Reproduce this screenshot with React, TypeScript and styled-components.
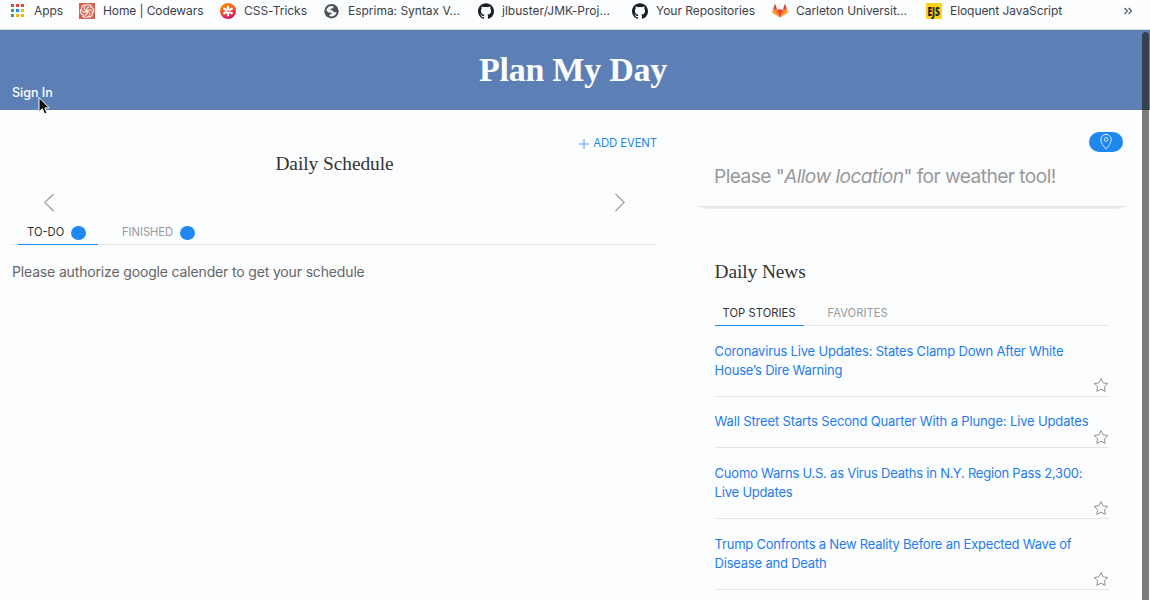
import React from "react";
import styled, { createGlobalStyle } from "styled-components";
import { SiGithub } from "react-icons/si";

const GlobalStyle = createGlobalStyle`
  *, *::before, *::after { box-sizing: border-box; }
  html, body { margin: 0; height: 100%; overflow: hidden; }
  body {
    background: #fcfdff;
    font-family: Inter, "Liberation Sans", sans-serif;
    color: #666;
  }
  h1, h2, p, ul { margin: 0; padding: 0; }
  ul { list-style: none; }
  button { font: inherit; border: 0; background: none; padding: 0; cursor: pointer; }
  a { text-decoration: none; color: inherit; }
  svg { display: block; flex: none; }
`;

const Window = styled.div`
  position: relative;
  display: flex;
  flex-direction: column;
  width: 1150px;
  height: 600px;
  overflow: hidden;
`;

/* ---------- bookmarks bar ---------- */

const BookmarksBar = styled.nav`
  display: flex;
  align-items: center;
  height: 30px;
  padding: 0 0 7px 10px;
  border-bottom: 1px solid #d9e0e3;
  flex: none;
`;

const Bookmark = styled.a<{ $width: number; $gap?: number; $tracking?: number }>`
  display: flex;
  align-items: center;
  gap: ${(p) => p.$gap ?? 8}px;
  width: ${(p) => p.$width}px;
  flex: none;
  font-size: 12px;
  line-height: 16px;
  letter-spacing: ${(p) => p.$tracking ?? 0}px;
  color: #3c3f48;
  white-space: nowrap;
`;

const EjsLogo = styled.span`
  display: flex;
  align-items: center;
  justify-content: center;
  width: 16px;
  height: 16px;
  background: #fcd21c;
  color: #222;
  font: 700 13px/16px "Open Sans", sans-serif;
  letter-spacing: 0;

  b { transform: scaleX(0.64); }
`;

const Overflow = styled.button`
  margin-left: auto;
  margin-right: 18px;
`;

/* ---------- page header ---------- */

const Header = styled.header`
  display: grid;
  grid-template-rows: 54px 26px;
  height: 80px;
  background: #5c80b5;
  color: #fcfdff;
  flex: none;
`;

const SiteTitle = styled.h1`
  padding: 13px 4px 0 0;
  font: 700 34px/54px "Liberation Serif", serif;
  letter-spacing: -0.24px;
  text-align: center;
`;

const SignIn = styled.a`
  justify-self: start;
  padding-left: 12px;
  font-size: 12.5px;
  font-weight: 500;
  line-height: 18px;
`;

/* ---------- layout ---------- */

const Main = styled.main`
  display: grid;
  grid-template-columns: 645px 432px;
  column-gap: 39px;
  padding-left: 12px;
  flex: 1;
  min-height: 0;
`;

const SectionTitle = styled.h2<{ $tracking: number }>`
  font: 400 19.4px/28px "Liberation Serif", serif;
  letter-spacing: ${(p) => p.$tracking}px;
  color: #333;
`;

const Tabs = styled.ul<{ $inset?: number }>`
  display: flex;
  height: 26px;
  padding-left: ${(p) => p.$inset ?? 0}px;
  border-bottom: 1px solid #e5e5e8;
`;

const Tab = styled.li<{ $active?: boolean; $width: number; $tracking: number; $pad?: number }>`
  display: flex;
  align-items: center;
  gap: 7px;
  width: ${(p) => p.$width}px;
  height: 26px;
  padding: 1px 0 0 ${(p) => p.$pad ?? 8}px;
  border-bottom: 1px solid ${(p) => (p.$active ? "#1e87f0" : "transparent")};
  font-size: 11.2px;
  line-height: 16px;
  letter-spacing: ${(p) => p.$tracking}px;
  color: ${(p) => (p.$active ? "#333" : "#999")};
  white-space: nowrap;
`;

/* ---------- schedule ---------- */

const Schedule = styled.section`
  display: flex;
  flex-direction: column;
  padding-top: 24px;
`;

const AddEvent = styled.button`
  display: flex;
  align-items: center;
  align-self: flex-end;
  gap: 4px;
  height: 18px;
  padding-top: 1px;
  font-size: 11.3px;
  line-height: 17px;
  letter-spacing: -0.08px;
  color: #1e87f0;
`;

const ScheduleTitle = styled(SectionTitle)`
  margin-top: -2px;
  text-align: center;
`;

const DayNav = styled.div`
  display: flex;
  justify-content: space-between;
  margin-top: 15px;
  padding: 0 32px;
  color: #999;
`;

const ScheduleTabs = styled.div`
  margin-top: 7px;
`;

const Badge = styled.span`
  width: 15px;
  height: 14px;
  margin-top: 2px;
  border-radius: 50%;
  background: #1e87f0;
`;

const Notice = styled.p`
  margin-top: 16px;
  font-size: 14px;
  line-height: 22px;
  letter-spacing: -0.155px;
`;

/* ---------- sidebar ---------- */

const Sidebar = styled.aside`
  display: flex;
  flex-direction: column;
  padding-top: 22px;
`;

const Weather = styled.section`
  display: flex;
  flex-direction: column;
  height: 74px;
  padding: 0 5px 0 18px;
`;

const LocationButton = styled.button`
  display: flex;
  align-items: center;
  justify-content: center;
  align-self: flex-end;
  width: 34px;
  height: 20px;
  border-radius: 10px;
  background: #1e87f0;
  color: #fff;
`;

const WeatherNotice = styled.p`
  margin-top: 10px;
  font-size: 19.2px;
  line-height: 28px;
  letter-spacing: -0.58px;
  color: #999;
  white-space: nowrap;
`;

const CardEdge = styled.div`
  height: 3px;
  background: linear-gradient(#e2e4e6, #eceef0);
  clip-path: polygon(0 0, 100% 0, 97.5% 100%, 2.5% 100%);
`;

const News = styled.section`
  width: 413px;
  padding: 49px 0 0 18.6px;
`;

const NewsTabs = styled.div`
  margin-top: 14px;
`;

const Story = styled.li<{ $lines: number }>`
  position: relative;
  height: ${(p) => (p.$lines === 2 ? 71 : 51)}px;
  padding-top: ${(p) => (p.$lines === 2 ? 16 : 15)}px;
  border-bottom: 1px solid #e5e5e8;
  font-size: 13px;
  line-height: 19px;
  color: #1e7cf0;
  white-space: nowrap;
`;

const StoryLine = styled.span<{ $tracking: number }>`
  display: block;
  letter-spacing: ${(p) => p.$tracking}px;
`;

const Favorite = styled.button`
  position: absolute;
  right: 0;
  bottom: 2px;
  color: #8c8c8c;

  ${Story}:first-child & { bottom: 3px; }
`;

/* ---------- overlays ---------- */

const Scrollbar = styled.div`
  position: absolute;
  top: 32px;
  right: 1px;
  bottom: 0;
  width: 7px;
  border-radius: 4px 4px 0 0;
  background: linear-gradient(#37404f 78px, #7b7b7b 78px);
`;

const Cursor = styled.svg`
  position: absolute;
  left: 36.5px;
  top: 96px;
`;

/* ---------- drawings ---------- */

const appColors = ["#ea4335", "#ea4335", "#ea4335", "#34a853", "#1e87f0", "#fbb704", "#34a853", "#fbb704", "#fbb704"];

const AppsIcon = () => (
  <svg width="14" height="14" viewBox="0 0 14 14" shapeRendering="crispEdges">
    {appColors.map((fill, i) => (
      <rect key={i} x={1 + (i % 3) * 5} y={Math.floor(i / 3) * 5} width="3" height="3" fill={fill} />
    ))}
  </svg>
);

const CodewarsIcon = () => (
  <svg width="16" height="16" viewBox="0 0 16 16">
    <rect width="16" height="16" fill="#d0604f" />
    <g fill="none" stroke="#fbe6e2" strokeWidth="1.25" strokeLinecap="round">
      {[0, 60, 120, 180, 240, 300].map((angle) => (
        <g key={angle} transform={`rotate(${angle} 8 8)`}>
          <path d="M8 8C7.2 6 8 4.3 10 3.8" />
          <path d="M6 3C7.8 1 10.8 1.2 12.3 3" />
        </g>
      ))}
    </g>
  </svg>
);

const CssTricksIcon = () => (
  <svg width="16" height="16" viewBox="0 0 16 16">
    <defs>
      <linearGradient id="tricks" x1="0.2" y1="0" x2="0.6" y2="1">
        <stop offset="0.1" stopColor="#ff8a00" />
        <stop offset="0.9" stopColor="#da1b60" />
      </linearGradient>
    </defs>
    <circle cx="8" cy="8" r="8" fill="url(#tricks)" />
    <g stroke="#fff" strokeWidth="2.3" strokeLinecap="round">
      <path d="M8 3.6V12.4M4.2 5.8L11.8 10.2M11.8 5.8L4.2 10.2" />
    </g>
    <circle cx="8" cy="8" r="0.9" fill="#f05a3c" />
  </svg>
);

const GlobeIcon = () => (
  <svg width="15" height="16" viewBox="0 0 15 16">
    <circle cx="7.5" cy="8.2" r="7.2" fill="#4d5157" />
    <path
      fill="#f7f8fa"
      d="M2.4 7.4C2.8 4.8 5 3 7.4 3L9.6 3.6 9.2 5.2 7 5.6 6.4 7.2 8.8 7.6 9.8 9.2 12.6 9.2C12 11.8 10 13.5 7.5 13.5L5.4 12.9 5.8 11.6 7.6 11 7.6 9.8 4.6 9.4Z"
    />
  </svg>
);

const GitlabIcon = () => (
  <svg width="16" height="16" viewBox="0 0 16 16">
    <path fill="#e24329" d="M8 14.8L10.9 6.4H5.1Z" />
    <path fill="#fc6d26" d="M8 14.8L5.1 6.4H1Z M8 14.8L10.9 6.4H15Z" />
    <path fill="#fca326" d="M1 6.4L0.1 9.1C0 9.4 0.1 9.7 0.3 9.8L8 14.8Z M15 6.4L15.9 9.1C16 9.4 15.9 9.7 15.7 9.8L8 14.8Z" />
    <path fill="#e24329" d="M1 6.4H5.1L3.3 1.3C3.2 1 2.8 1 2.7 1.3Z M15 6.4H10.9L12.7 1.3C12.8 1 13.2 1 13.3 1.3Z" />
  </svg>
);

const ChevronsIcon = () => (
  <svg width="8" height="8" viewBox="0 0 8 8" fill="none" stroke="#5f6074" strokeWidth="1.4">
    <path d="M0.6 1L3.4 4L0.6 7M4.6 1L7.4 4L4.6 7" />
  </svg>
);

const PlusIcon = () => (
  <svg width="10" height="10" viewBox="0 0 10 10" stroke="#1e87f0" strokeWidth="0.75">
    <path d="M5 0V10M0 5H10" />
  </svg>
);

const SlideArrow = ({ next }: { next?: boolean }) => (
  <svg width="10" height="19" viewBox="0 0 10 19" fill="none" stroke="currentColor">
    <path d={next ? "M0.5 1L9.3 9.5L0.5 18" : "M9.5 1L0.7 9.5L9.5 18"} strokeWidth="1.1" />
  </svg>
);

const PinIcon = () => (
  <svg width="16" height="16" viewBox="0 0 20 20" fill="none" stroke="currentColor" strokeWidth="1.05">
    <path d="M10,0.5 C6.41,0.5 3.5,3.39 3.5,6.98 C3.5,11.83 10,19 10,19 C10,19 16.5,11.83 16.5,6.98 C16.5,3.39 13.59,0.5 10,0.5 Z" />
    <circle cx="10" cy="6.8" r="2.3" />
  </svg>
);

const StarIcon = () => (
  <svg width="16" height="16" viewBox="0 0 20 20" fill="none" stroke="currentColor" strokeWidth="1.2">
    <polygon points="10 2 12.63 7.27 18.5 8.12 14.25 12.22 15.25 18 10 15.27 4.75 18 5.75 12.22 1.5 8.12 7.37 7.27" />
  </svg>
);

/* ---------- content ---------- */

const bookmarks = [
  { label: "Apps", icon: <AppsIcon />, width: 69, gap: 10, tracking: -0.1 },
  { label: "Home | Codewars", icon: <CodewarsIcon />, width: 141, tracking: -0.1 },
  { label: "CSS-Tricks", icon: <CssTricksIcon />, width: 104, tracking: -0.03 },
  { label: "Esprima: Syntax V...", icon: <GlobeIcon />, width: 154, gap: 9, tracking: -0.02 },
  { label: "jlbuster/JMK-Proj...", icon: <SiGithub size={16} color="#1b1f23" />, width: 154, tracking: 0.02 },
  { label: "Your Repositories", icon: <SiGithub size={16} color="#1b1f23" />, width: 140, tracking: -0.04 },
  { label: "Carleton Universit...", icon: <GitlabIcon />, width: 154, tracking: -0.05 },
  { label: "Eloquent JavaScript", icon: <EjsLogo><b>EJS</b></EjsLogo>, width: 140, tracking: -0.07 },
];

const stories = [
  [
    { text: "Coronavirus Live Updates: States Clamp Down After White", tracking: -0.18 },
    { text: "House’s Dire Warning", tracking: -0.2 },
  ],
  [{ text: "Wall Street Starts Second Quarter With a Plunge: Live Updates", tracking: -0.145 }],
  [
    { text: "Cuomo Warns U.S. as Virus Deaths in N.Y. Region Pass 2,300:", tracking: -0.225 },
    { text: "Live Updates", tracking: -0.2 },
  ],
  [
    { text: "Trump Confronts a New Reality Before an Expected Wave of", tracking: -0.225 },
    { text: "Disease and Death", tracking: -0.21 },
  ],
];

export default function App() {
  return (
    <Window>
      <GlobalStyle />
      <BookmarksBar>
        {bookmarks.map((b) => (
          <Bookmark key={b.label} $width={b.width} $gap={b.gap} $tracking={b.tracking}>
            {b.icon}
            <span>{b.label}</span>
          </Bookmark>
        ))}
        <Overflow aria-label="More bookmarks">
          <ChevronsIcon />
        </Overflow>
      </BookmarksBar>

      <Header>
        <SiteTitle>Plan My Day</SiteTitle>
        <SignIn>Sign In</SignIn>
      </Header>

      <Main>
        <Schedule>
          <AddEvent>
            <PlusIcon />
            ADD EVENT
          </AddEvent>
          <ScheduleTitle $tracking={-0.06}>Daily Schedule</ScheduleTitle>
          <DayNav>
            <SlideArrow />
            <SlideArrow next />
          </DayNav>
          <ScheduleTabs>
            <Tabs $inset={6}>
              <Tab $active $width={80} $pad={9} $tracking={0}>
                TO-DO
                <Badge />
              </Tab>
              <Tab $width={100} $pad={24} $tracking={-0.03}>
                FINISHED
                <Badge />
              </Tab>
            </Tabs>
          </ScheduleTabs>
          <Notice>Please authorize google calender to get your schedule</Notice>
        </Schedule>

        <Sidebar>
          <Weather>
            <LocationButton aria-label="Use my location">
              <PinIcon />
            </LocationButton>
            <WeatherNotice>
              Please "<em>Allow location</em>" for weather tool!
            </WeatherNotice>
          </Weather>
          <CardEdge />
          <News>
            <SectionTitle $tracking={-0.1}>Daily News</SectionTitle>
            <NewsTabs>
              <Tabs>
                <Tab $active $width={89} $tracking={0.04}>TOP STORIES</Tab>
                <Tab $width={90} $pad={24} $tracking={0.03}>FAVORITES</Tab>
              </Tabs>
            </NewsTabs>
            <ul>
              {stories.map((lines) => (
                <Story key={lines[0].text} $lines={lines.length}>
                  {lines.map((l) => (
                    <StoryLine key={l.text} $tracking={l.tracking}>{l.text}</StoryLine>
                  ))}
                  <Favorite aria-label="Add to favorites">
                    <StarIcon />
                  </Favorite>
                </Story>
              ))}
            </ul>
          </News>
        </Sidebar>
      </Main>

      <Scrollbar />
      <Cursor width="14" height="20" viewBox="0 0 14 20">
        <path d="M2 1.5V15.8L5.3 12.7L7.6 18L10 17L7.8 11.9H12.2Z" fill="#0b0b0b" stroke="#fff" strokeWidth="1" strokeLinejoin="round" />
      </Cursor>
    </Window>
  );
}
